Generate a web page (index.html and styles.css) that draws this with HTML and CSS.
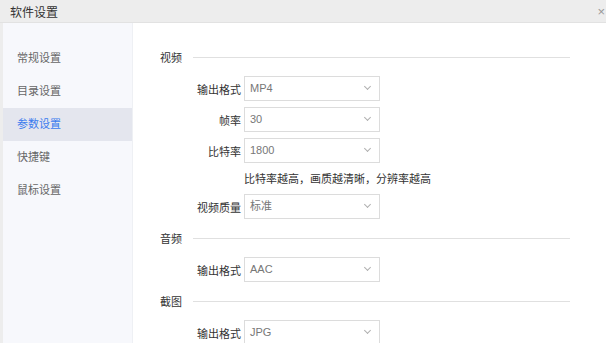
FILE: index.html
```html
<!DOCTYPE html>
<html lang="zh-CN">
<head>
    <meta charset="UTF-8">
    <title>软件设置</title>
    <link rel="stylesheet" href="styles.css">
</head>
<body>
    <div class="dialog">
        <div class="title">
            <span>软件设置</span>
            <span class="close">×</span>
        </div>
        <div class="main">
            <ul class="menu">
                <li>常规设置</li>
                <li>目录设置</li>
                <li class="current">参数设置</li>
                <li>快捷键</li>
                <li>鼠标设置</li>
            </ul>
            <div class="content">
                <div class="group">
                    <div class="group-title"><span>视频</span><i></i></div>
                    <div class="row">
                        <label>输出格式</label>
                        <div class="select">MP4<b></b></div>
                    </div>
                    <div class="row">
                        <label>帧率</label>
                        <div class="select">30<b></b></div>
                    </div>
                    <div class="row">
                        <label>比特率</label>
                        <div class="select">1800<b></b></div>
                    </div>
                    <p class="tip">比特率越高，画质越清晰，分辨率越高</p>
                    <div class="row">
                        <label>视频质量</label>
                        <div class="select">标准<b></b></div>
                    </div>
                </div>
                <div class="group">
                    <div class="group-title"><span>音频</span><i></i></div>
                    <div class="row">
                        <label>输出格式</label>
                        <div class="select">AAC<b></b></div>
                    </div>
                </div>
                <div class="group">
                    <div class="group-title"><span>截图</span><i></i></div>
                    <div class="row">
                        <label>输出格式</label>
                        <div class="select">JPG<b></b></div>
                    </div>
                </div>
            </div>
        </div>
    </div>
</body>
</html>
```

FILE: styles.css
```css
* {
    margin: 0;
    padding: 0;
    box-sizing: border-box;
}
html, body {
    width: 606px;
    height: 343px;
    overflow: hidden;
}
body {
    font-family: "Liberation Sans", "Noto Sans CJK SC", sans-serif;
    font-size: 11px;
    color: #333;
    background: #ededed;
}
.dialog {
    height: 343px;
    display: flex;
    flex-direction: column;
}
.title {
    flex-shrink: 0;
    height: 23px;
    padding: 0 0 0 10px;
    display: flex;
    align-items: center;
    justify-content: space-between;
    font-size: 12px;
    color: #333;
    background: #ededed;
    border-bottom: 1px solid #e2e2e2;
}
.title .close {
    color: #999;
    font-size: 13px;
    margin-right: 1px;
}
.main {
    flex: 1;
    min-height: 0;
    overflow: hidden;
    display: flex;
    margin-left: 3px;
    background: #fff;
}
.menu {
    width: 130px;
    list-style: none;
    background: #f7f8fc;
    border-right: 1px solid #eef0f4;
    padding-top: 19px;
}
.menu li {
    height: 33px;
    line-height: 33px;
    padding-left: 14px;
    color: #666;
}
.menu li.current {
    background: #e4e6ee;
    color: #3a7bef;
}
.content {
    flex: 1;
    padding: 27px 0 0 27px;
}
.group {
    padding-bottom: 6px;
}
.group-title {
    display: flex;
    align-items: center;
    height: 14px;
    margin-bottom: 12px;
    color: #333;
}
.group-title span {
    width: 33px;
}
.group-title i {
    width: 377px;
    height: 1px;
    background: #e0e0e0;
}
.row {
    display: flex;
    align-items: center;
    height: 25px;
    margin-bottom: 6px;
}
.row label {
    width: 84px;
    text-align: right;
    padding-right: 3px;
}
.select {
    position: relative;
    width: 136px;
    height: 25px;
    line-height: 23px;
    padding-left: 5px;
    border: 1px solid #dcdcdc;
    color: #777;
}
.select b {
    position: absolute;
    right: 9px;
    top: 7px;
    width: 5px;
    height: 5px;
    border-right: 1px solid #b0b0b0;
    border-bottom: 1px solid #b0b0b0;
    transform: rotate(45deg);
}
.tip {
    margin: 10px 0 9px 84px;
    line-height: 12px;
    height: 12px;
}
```
